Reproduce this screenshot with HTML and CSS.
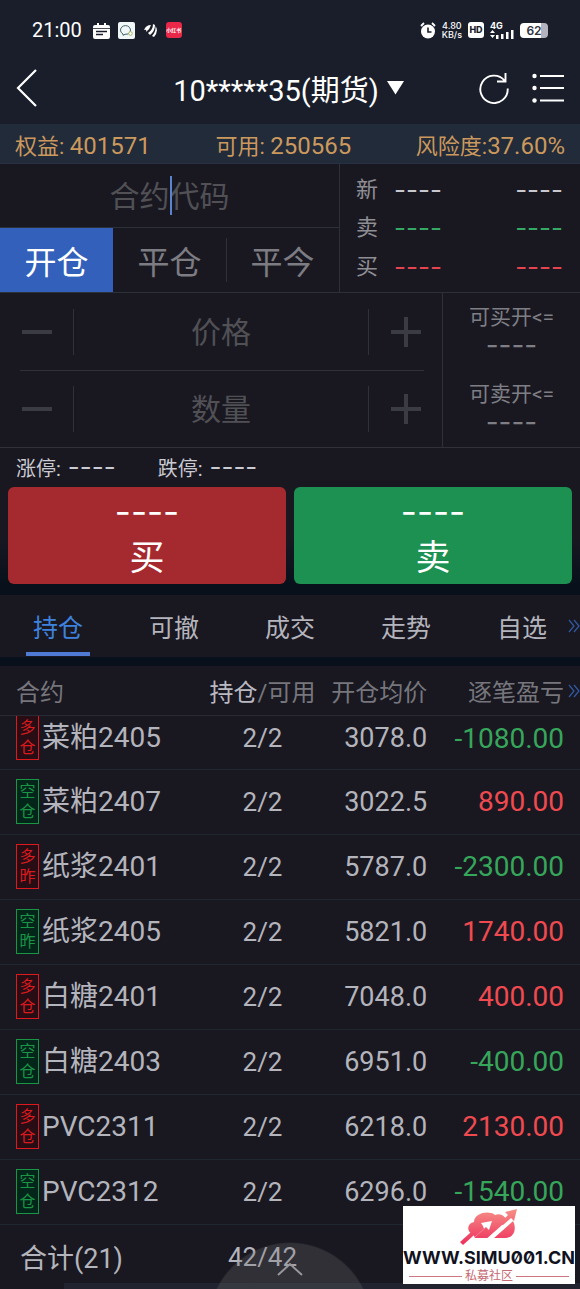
FILE: index.html
```html
<!DOCTYPE html>
<html lang="zh-CN">
<head>
<meta charset="utf-8">
<meta name="viewport" content="width=device-width, initial-scale=1">
<title>期货交易</title>
<link rel="stylesheet" href="styles.css">
</head>
<body>
<div class="app">
  <div class="status">
    <span class="clock">21:00</span>
    <svg class="st-icon" width="17" height="17" viewBox="0 0 17 17"><path d="M2 3h2V1h2v2h5V1h2v2h2q2 0 2 2v10q0 2-2 2H2q-2 0-2-2V5q0-2 2-2z" fill="#fff"/><path d="M0 6.500h17" stroke="#191e2a" stroke-width=".8"/><path d="M3 9.500h11M3 12.500h7" stroke="#191e2a" stroke-width="1.400"/></svg>
    <svg class="st-icon" width="17" height="17" viewBox="0 0 17 17"><rect width="17" height="17" rx="2" fill="#f1f7f6"/><path d="M5 12a5 4.500 0 1 1 5 0l-3 .3-2 1z" fill="none" stroke="#40636a"/><circle cx="12.500" cy="11.500" r="1.800" fill="#fff" stroke="#a8b460"/></svg>
    <svg class="st-icon" width="15" height="17" viewBox="0 0 15 17"><path d="M1 8Q3 3 8 3Q7 7 3 10Q4 7 1 8zM5 11Q10 8 10 2L12 3Q12 9 7 13zM9 14Q13 10 12.500 4Q16 9 11 15z" fill="#fff"/></svg>
    <span class="red-app">小红书</span>
    <span class="status-right">
      <svg width="16" height="17" viewBox="0 0 16 17"><circle cx="8" cy="9.500" r="7" fill="#fff"/><path d="M1 4l3-3M15 4l-3-3" stroke="#fff" stroke-width="1.800"/><path d="M8 5.500V10h3.500" fill="none" stroke="#191e2a" stroke-width="1.600"/></svg>
      <span class="speed">4.80<br>KB/s</span>
      <span class="hd">HD</span>
      <span class="signal"><span>4G</span>
        <svg width="24" height="9" viewBox="0 0 24 9"><path d="M0 3l2.500-3L5 3zM0 5l2.500 3L5 5zM6 5h2.500v4H6zM11 4h2.500v5H11zM16 2h2.500v7H16zM21 0h2.500v9H21z" fill="#fff"/></svg>
      </span>
      <span class="battery">62</span>
    </span>
  </div>

  <header class="titlebar">
    <button class="plain" aria-label="返回"><svg width="22" height="40" viewBox="0 0 22 40"><path d="M20 2L2 20l18 18" fill="none" stroke="#fff" stroke-width="2.200"/></svg></button>
    <button class="plain account">10*****35(期货)<svg width="17" height="14" viewBox="0 0 17 14"><path d="M0 0h17L8.500 13.500z" fill="#fff"/></svg></button>
    <div class="tools">
      <button class="plain" aria-label="刷新"><svg width="30" height="32" viewBox="0 0 30 32"><path d="M25.500 8.500A13.700 13.700 0 1 0 28.700 16.500M26.500 1v8.500H18" fill="none" stroke="#fff" stroke-width="1.900"/></svg></button>
      <button class="plain" aria-label="菜单"><svg width="32" height="30" viewBox="0 0 32 30"><g fill="#fff"><circle cx="2.500" cy="3" r="2.200"/><circle cx="2.500" cy="15" r="2.200"/><circle cx="2.500" cy="27.500" r="2.200"/></g><path d="M8 3h24M8 15h24M8 27.500h24" stroke="#fff" stroke-width="2.200"/></svg></button>
    </div>
  </header>

  <div class="funds"><span>权益: <b>401571</b></span><span>可用: <b>250565</b></span><span>风险度:<b>37.60%</b></span></div>

  <section class="quote">
    <div class="contract">
      <div class="code"><input class="field" type="text" placeholder="合约代码" aria-label="合约代码"><i class="caret"></i></div>
      <div class="modes">
        <button class="mode on">开仓</button><button class="mode">平仓</button><button class="mode">平今</button>
      </div>
    </div>
    <div class="prices">
      <div class="price"><span>新</span><span class="dash">----</span><span class="dash">----</span></div>
      <div class="price"><span>卖</span><span class="dash green">----</span><span class="dash green">----</span></div>
      <div class="price"><span>买</span><span class="dash red">----</span><span class="dash red">----</span></div>
    </div>
  </section>

  <section class="order">
    <div class="steppers">
      <div class="stepper">
        <button class="step" aria-label="减价格"><svg width="30" height="30" viewBox="0 0 30 30"><path d="M0 15h30" stroke="#3b3b43" stroke-width="4"/></svg></button>
        <input class="field" type="text" placeholder="价格" aria-label="价格">
        <button class="step" aria-label="加价格"><svg width="30" height="30" viewBox="0 0 30 30"><path d="M0 15h30M15 0v30" stroke="#3b3b43" stroke-width="4"/></svg></button>
      </div>
      <div class="stepper">
        <button class="step" aria-label="减数量"><svg width="30" height="30" viewBox="0 0 30 30"><path d="M0 15h30" stroke="#3b3b43" stroke-width="4"/></svg></button>
        <input class="field" type="text" placeholder="数量" aria-label="数量">
        <button class="step" aria-label="加数量"><svg width="30" height="30" viewBox="0 0 30 30"><path d="M0 15h30M15 0v30" stroke="#3b3b43" stroke-width="4"/></svg></button>
      </div>
    </div>
    <div class="avail">
      <div>可买开&lt;=<span class="dash">----</span></div>
      <div>可卖开&lt;=<span class="dash">----</span></div>
    </div>
  </section>

  <div class="limits"><span>涨停: <span class="dash">----</span></span><span>跌停: <span class="dash">----</span></span></div>

  <div class="actions">
    <button class="trade buy"><span class="dash">----</span>买</button>
    <button class="trade sell"><span class="dash">----</span>卖</button>
  </div>

  <nav class="tabs">
    <button class="tab on">持仓</button><button class="tab">可撤</button><button class="tab">成交</button><button class="tab">走势</button><button class="tab">自选</button>
    <svg class="more" width="12" height="14" viewBox="0 0 12 14"><path d="M1 1l5 6-5 6M6 1l5 6-5 6" fill="none" stroke="#315aa5" stroke-width="1.200"/></svg>
  </nav>

  <main class="positions">
    <svg class="more" width="12" height="14" viewBox="0 0 12 14"><path d="M1 1l5 6-5 6M6 1l5 6-5 6" fill="none" stroke="#315aa5" stroke-width="1.200"/></svg>
    <table class="table">
      <thead><tr><th class="c-name">合约</th><th class="c-qty"><span class="lit">持仓</span>/可用</th><th class="c-avg">开仓均价</th><th class="c-pnl">逐笔盈亏</th></tr></thead>
      <tbody>
        <tr class="clipped"><td><div class="name"><span class="tag long">多<br>仓</span>菜粕2405</div></td><td>2/2</td><td>3078.0</td><td class="down">-1080.00</td></tr>
        <tr><td><div class="name"><span class="tag short">空<br>仓</span>菜粕2407</div></td><td>2/2</td><td>3022.5</td><td class="up">890.00</td></tr>
        <tr><td><div class="name"><span class="tag long">多<br>昨</span>纸浆2401</div></td><td>2/2</td><td>5787.0</td><td class="down">-2300.00</td></tr>
        <tr><td><div class="name"><span class="tag short">空<br>昨</span>纸浆2405</div></td><td>2/2</td><td>5821.0</td><td class="up">1740.00</td></tr>
        <tr><td><div class="name"><span class="tag long">多<br>仓</span>白糖2401</div></td><td>2/2</td><td>7048.0</td><td class="up">400.00</td></tr>
        <tr><td><div class="name"><span class="tag short">空<br>仓</span>白糖2403</div></td><td>2/2</td><td>6951.0</td><td class="down">-400.00</td></tr>
        <tr><td><div class="name"><span class="tag long">多<br>仓</span>PVC2311</div></td><td>2/2</td><td>6218.0</td><td class="up">2130.00</td></tr>
        <tr><td><div class="name"><span class="tag short">空<br>仓</span>PVC2312</div></td><td>2/2</td><td>6296.0</td><td class="down">-1540.00</td></tr>
      </tbody>
      <tfoot><tr><td>合计(21)</td><td>42/42</td><td></td><td></td></tr></tfoot>
    </table>
    <div class="edge"></div>
    <button class="pull" aria-label="展开"><svg width="26" height="14" viewBox="0 0 26 14"><path d="M1 13L13 2l12 11" fill="none" stroke="#96969c" stroke-width="2"/></svg></button>
  </main>

  <aside class="mark">
    <svg width="60" height="38" viewBox="10 7 60 38">
      <defs><linearGradient id="pink" gradientUnits="userSpaceOnUse" x1="0" y1="8" x2="0" y2="44"><stop offset="0" stop-color="#f68f86"/><stop offset="1" stop-color="#ee2f5d"/></linearGradient></defs>
      <path d="M24 33C17 31 18 22 25 21C25 12 40 9 46 14C50 12 55 14 57 18L60 21L42 37H26z" fill="url(#pink)"/>
      <path d="M14 44L11 41L31 23L34 26z" fill="url(#pink)"/>
      <path d="M20 41L37 26L40 29L43 20L32 22L34 25L35 28L17 44H24z" fill="#fff"/>
      <path d="M45 37L64 20C68 28 65 36 57 37z" fill="url(#pink)"/>
      <path d="M38 40L63 18" stroke="#fff" stroke-width="4"/>
      <path d="M50 23L59 14L56 11L68 8L65 20L62 17L54 24z" fill="url(#pink)"/>
    </svg>
    <span class="site">WWW.SIMU001.CN</span>
    <span class="club">私募社区</span>
  </aside>
</div>
</body>
</html>
```
FILE: styles.css
```css
* { box-sizing: border-box; }
body {
  margin: 0;
  background: #08111b;
  color: #b4b4bc;
  font-family: Roboto, "Noto Sans CJK SC", sans-serif;
  font-weight: 400;
}
button, input { font: inherit; color: inherit; border: 0; padding: 0; margin: 0; background: none; border-radius: 0; }
svg { display: block; flex: none; }
b { font-weight: inherit; }

.app { position: relative; overflow: hidden; }
.dash { font-family: Inter, sans-serif; }
.green { color: #35a866; }
.red { color: #e64550; }

/* status bar and title */
.status { display: flex; align-items: center; gap: 8px; height: 60px; padding: 0 32px; background: #191e2a; color: #fff; }
.clock { font-size: 20px; margin-right: 3px; }
.red-app { width: 16px; line-height: 16px; border-radius: 3px; background: #e92749; font-size: 5px; font-weight: 700; text-align: center; }
.status-right { display: flex; align-items: center; gap: 6px; margin-left: auto; font-family: Inter, sans-serif; }
.speed { font-size: 9px; line-height: 9px; font-weight: 500; text-align: center; }
.hd { width: 16px; line-height: 16px; border-radius: 3px; background: #fff; color: #191e2a; font-size: 9px; font-weight: 800; text-align: center; }
.signal { font-size: 9px; line-height: 8px; font-weight: 700; }
.battery { width: 28px; line-height: 15px; border-radius: 4px; background: linear-gradient(90deg, #fff 75%, #b2b3be 75%); color: #30333e; font-size: 12px; font-weight: 600; text-align: center; }
.titlebar { display: flex; align-items: center; justify-content: space-between; height: 64px; padding: 0 16px 8px; background: #191e2a; color: #fff; }
.account { display: flex; align-items: center; gap: 8px; font-size: 29px; padding-left: 60px; }
.tools { display: flex; align-items: center; gap: 23px; }
.funds { display: flex; align-items: center; justify-content: space-between; height: 40px; padding: 0 15px; background: #212b39; color: #cb995d; font-size: 22px; border-bottom: 1px solid #263144; }
.funds b { font-size: 24px; }

/* contract picker and quotes */
.quote { display: grid; grid-template-columns: 340fr 240fr; height: 129px; background: #191821; border-bottom: 1px solid #2b3039; }
.contract { display: flex; flex-direction: column; border-right: 1px solid #2b3039; }
.prices { display: flex; flex-direction: column; justify-content: space-around; padding: 7px 17px 6px 16px; }
.code { position: relative; flex: 1; display: flex; border-bottom: 1px solid #2b3039; }
.field { flex: 1; width: 100%; min-width: 0; padding-top: 2px; text-align: center; font-size: 30px; }
.field::placeholder { color: #505055; opacity: 1; }
.caret { position: absolute; left: 50%; top: 12px; bottom: 12px; width: 2px; background: #5b84cf; }
.modes { display: flex; height: 64px; font-size: 32px; color: #7c7c82; }
.mode { flex: 1; position: relative; }
.mode.on { background: #3260bb; color: #fff; }
.mode:last-child::before { content: ""; position: absolute; left: 0; top: 10px; bottom: 10px; width: 1px; background: #2b3039; }
.price { display: flex; align-items: center; font-size: 22px; color: #8e8e94; line-height: 32px; }
.price .dash { font-size: 26px; margin-left: 16px; }
.price .dash:not(.green):not(.red) { color: #c8c8ce; }
.price .dash:last-child { margin-left: auto; }

/* order entry */
.order { display: grid; grid-template-columns: 443fr 137fr; height: 155px; background: #191821; border-bottom: 1px solid #303039; }
.steppers { position: relative; display: flex; flex-direction: column; border-right: 1px solid #303039; }
.stepper { flex: 1; display: flex; align-items: center; }
.stepper + .stepper::before { content: ""; position: absolute; left: 20px; right: 18px; top: 50%; height: 1px; background: #303039; }
.step { display: flex; align-items: center; justify-content: center; width: 74px; height: 46px; border-right: 1px solid #303039; }
.field + .step { border-right: 0; border-left: 1px solid #303039; }
.avail { display: flex; flex-direction: column; font-size: 21px; line-height: 28px; color: #7e7e84; text-align: center; }
.avail div { flex: 1; padding-top: 10px; }
.avail .dash { display: block; font-size: 28px; }
.limits { display: flex; align-items: center; gap: 42px; height: 39px; padding: 0 16px; background: #191821; font-size: 20px; color: #cacad2; }
.limits .dash { margin-left: 2px; font-size: 26px; line-height: 24px; }
.actions { display: flex; gap: 8px; padding: 0 8px; background: linear-gradient(#191821 50%, #08111b); }
.trade { flex: 1; height: 97px; border-radius: 6px; color: #fff; font-size: 35px; line-height: 46px; }
.trade .dash { display: block; line-height: 42px; padding-bottom: 4px; }
.buy { background: #a52a30; }
.sell { background: #1c9152; }

/* tabs */
.tabs { position: relative; display: flex; height: 62px; margin: 11px 0 9px; background: #191821; font-size: 25px; }
.tab { flex: 1; display: flex; align-items: center; justify-content: center; position: relative; }
.tab.on { color: #3e82dd; }
.tab.on::after { content: ""; position: absolute; bottom: 1px; width: 64px; height: 4px; background: #507bd5; }
.more { position: absolute; right: 0; top: 24px; }

/* positions */
.positions { position: relative; background: #191821; }
.positions > .more { top: 18px; }
.table { width: 100%; table-layout: fixed; border-collapse: collapse; font-size: 27px; }
.c-name { width: 35%; }
.c-qty { width: 20%; }
.c-avg { width: 19%; }
th { height: 49px; padding: 0; font-size: 24px; font-weight: 400; color: #76767c; text-align: right; border-bottom: 1px solid #292a33; white-space: nowrap; }
td { height: 65px; padding: 0; text-align: right; border-bottom: 1px solid #1f2731; white-space: nowrap; }
th:first-child, td:first-child { text-align: left; padding-left: 16px; }
th:nth-child(2), td:nth-child(2) { text-align: center; padding-left: 3px; }
th:nth-child(3), td:nth-child(3) { padding-right: 2px; }
th:nth-child(4), td:nth-child(4) { padding-right: 16px; }
td:nth-child(4) { font-size: 28px; }
td:nth-child(2) { font-size: 26px; }
.lit { color: #b9b9c1; }
.name { display: flex; align-items: center; gap: 3px; font-size: 28px; line-height: 40px; }
.tag { width: 23px; height: 45px; border: 1px solid; text-align: center; font-size: 16px; line-height: 20px; padding-top: 2px; }
.long { color: #dc1a1d; background: #290d15; }
.short { color: #199545; background: #04251a; }
.up { color: #f04a50; }
.down { color: #36a65a; }
.clipped td { height: 54px; padding-bottom: 8px; }
.clipped .tag { height: 44px; border-top: 0; }
tfoot td { border: 0; }
tfoot td:first-child { padding-left: 20px; }
.edge { position: absolute; left: 64px; right: 0; bottom: 0; height: 6px; background: #21242e; }
.pull { position: absolute; left: 50%; bottom: 0; transform: translateX(-50%); width: 150px; height: 47px; padding-top: 20px; display: flex; justify-content: center; background: radial-gradient(circle 82px at 50% 82px, rgba(110, 110, 112, .28) 98%, transparent); }

/* site mark */
.mark { position: absolute; right: 5px; bottom: 5px; width: 172px; height: 78px; padding-top: 2px; background: #fff; display: flex; flex-direction: column; align-items: center; }
.site { font-family: Inter, sans-serif; font-size: 18px; line-height: 24px; font-weight: 700; font-feature-settings: "zero"; color: #10131f; }
.club { display: flex; align-items: center; gap: 3px; width: 160px; font-size: 12px; line-height: 12px; color: #c66a73; }
.club::before, .club::after { content: ""; flex: 1; height: 1px; background: #cf7780; }
```
